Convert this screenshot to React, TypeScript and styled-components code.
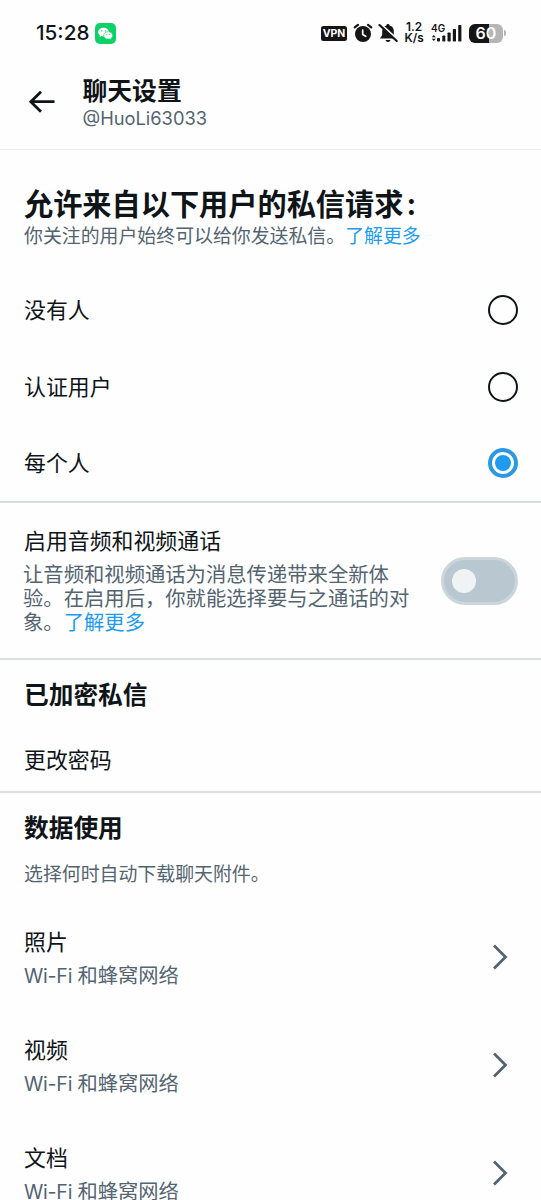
import React from 'react';
import styled, { createGlobalStyle } from 'styled-components';

const Global = createGlobalStyle`
  * { box-sizing: border-box; }
  html, body { margin: 0; padding: 0; background: #fefefe; overflow: hidden; height: 1200px; }
  body { font-family: Inter, "Noto Sans CJK SC", sans-serif; color: #0f1419; }
`;

const Screen = styled.main`
  width: 541px;
  height: 1200px;
  overflow: hidden;
  background: #fefefe;
`;

const StatusBar = styled.div`
  height: 66px;
  display: flex;
  align-items: center;
  padding: 0 38px 0 36px;
`;

const Clock = styled.span`
  font: 500 20.7px/24px Inter, sans-serif;
  width: 59px;
  white-space: nowrap;
`;

const StatusIcons = styled.div`
  margin-left: auto;
  display: flex;
  align-items: center;
`;

const VpnBadge = styled.span`
  width: 26px;
  height: 15px;
  margin-right: 6px;
  border-radius: 2.5px;
  background: #151515;
  color: #fff;
  font: 700 10.5px/15px Inter, sans-serif;
  text-align: center;
`;

const Gap = styled.span`
  width: 5px;
`;

const Speed = styled.span`
  width: 20px;
  margin: 0 7px 0 6px;
  font: 600 11.8px/11px Inter, sans-serif;
  text-align: center;
  display: flex;
  flex-direction: column;
`;

const Battery = styled.div`
  width: 34px;
  height: 19px;
  margin-left: 6px;
  border-radius: 6px;
  background: linear-gradient(90deg, #151515 60%, #b5b5b5 60%);
  color: #fff;
  font: 600 16px/19px Inter, sans-serif;
  text-align: center;
`;

const BatteryTip = styled.span`
  width: 2px;
  height: 6px;
  margin: 0 -3px 0 1px;
  border-radius: 0 2px 2px 0;
  background: #b5b5b5;
`;

const Header = styled.header`
  height: 84px;
  display: flex;
  padding: 11px 0 0 27px;
  border-bottom: 1px solid #e9eced;
`;

const BackIcon = styled.svg`
  width: 30px;
  height: 26px;
  margin: 12px 25.5px 0 0;
`;

const PageTitle = styled.h1`
  margin: 0;
  font-size: 24.8px;
  line-height: 29px;
  font-weight: 700;
`;

const Handle = styled.div`
  font-size: 18.3px;
  line-height: 24px;
  color: #536471;
`;

const Section = styled.section<{ $height: number; $top: number; $line?: string }>`
  height: ${p => p.$height}px;
  padding: ${p => p.$top}px 24px 0;
  border-bottom: 2px solid ${p => p.$line ?? '#dcdfe0'};
`;

const LargeHeading = styled.h2`
  margin: 0;
  font-size: 29.2px;
  line-height: 36px;
  font-weight: 700;
  white-space: nowrap;
`;

const Colon = styled.span`
  margin-left: 3px;
`;

const SectionHeading = styled.h2`
  margin: 0;
  font-size: 24.7px;
  line-height: 32px;
  font-weight: 700;
`;

const Note = styled.p<{ $gap?: number }>`
  margin: ${p => p.$gap ?? 0}px 0 0;
  font-size: 18.9px;
  line-height: 26px;
  color: #536471;
  white-space: nowrap;
`;

const Link = styled.a`
  color: #1d9bf0;
`;

const Options = styled.div`
  margin-top: 22px;
`;

const Option = styled.div`
  height: 76.5px;
  display: flex;
  align-items: center;
  justify-content: space-between;
`;

const Label = styled.div`
  font-size: 21.9px;
  line-height: 30px;
`;

const Radio = styled.span<{ $on: boolean }>`
  width: 30px;
  height: 30px;
  margin-right: -0.5px;
  border-radius: 50%;
  border: ${p => (p.$on ? '4px solid #2b98e4' : '2px solid #0f1419')};
  display: flex;
  align-items: center;
  justify-content: center;
  &::after {
    content: '';
    width: 16px;
    height: 16px;
    flex: none;
    border-radius: 50%;
    background: ${p => (p.$on ? '#1d9bf0' : 'transparent')};
  }
`;

const CallRow = styled.div`
  display: flex;
  justify-content: space-between;
`;

const CallText = styled.p`
  margin: 7px 0 0 -1px;
  width: 390px;
  font-size: 20.33px;
  line-height: 24px;
  color: #536471;
`;

const Toggle = styled.span`
  width: 77px;
  height: 48px;
  margin: 31px -1px 0 0;
  border-radius: 24px;
  border: 3px solid #cbd6dc;
  background: #b9c8d0;
  display: flex;
  align-items: center;
  padding-left: 8px;
  &::after {
    content: '';
    width: 24px;
    height: 24px;
    border-radius: 50%;
    background: #eff3f4;
  }
`;

const LinkRow = styled.div`
  margin-top: 34px;
`;

const DataList = styled.div`
  margin-top: 26px;
`;

const DataRow = styled.div`
  height: 108px;
  display: flex;
  justify-content: space-between;
  padding: 13px 8px 0 0;
`;

const Value = styled.div`
  margin-top: 5px;
  font-size: 20.3px;
  line-height: 28px;
  color: #536471;
  white-space: nowrap;
`;

const Network = styled.span`
  font-size: 19.6px;
  letter-spacing: -0.25px;
`;

const Chevron = styled.svg`
  width: 18px;
  height: 28px;
  margin-top: 16px;
`;

const options = [
  { label: '没有人', on: false },
  { label: '认证用户', on: false },
  { label: '每个人', on: true },
];

const downloads = ['照片', '视频', '文档'];

const WeChatIcon = () => (
  <svg width="21" height="21" viewBox="0 0 21 21">
    <rect width="21" height="21" rx="5" fill="#0bd267" />
    <path d="M8.6 4.700c-3.100 0-5.500 1.900-5.500 4.400 0 1.400.7 2.500 1.900 3.300l-.4 1.600 1.800-.9c.7.2 1.300.3 2 .3 3.100 0 5.600-1.900 5.600-4.300S11.600 4.700 8.600 4.700Z" fill="#fff" />
    <path d="M13.300 8.700c-2.600 0-4.600 1.600-4.600 3.700s2 3.700 4.600 3.700c.6 0 1.100-.1 1.600-.2l1.500.8-.4-1.400c1.100-.7 1.700-1.700 1.700-2.900 0-2.100-1.900-3.700-4.400-3.700Z" fill="#fff" stroke="#0bd267" strokeWidth=".6" />
    <g fill="#0bd267">
      <circle cx="6.800" cy="7.900" r=".7" /><circle cx="10.300" cy="7.900" r=".7" />
      <circle cx="11.800" cy="11.500" r=".6" /><circle cx="14.800" cy="11.500" r=".6" />
    </g>
  </svg>
);

const AlarmIcon = () => (
  <svg width="20" height="20" viewBox="0 0 20 20" fill="none" strokeLinecap="round">
    <circle cx="10" cy="11" r="8" fill="#151515" />
    <path d="M1.700 4.300 5 1.800M15 1.800l3.300 2.500" stroke="#151515" strokeWidth="2.200" />
    <path d="M9.700 7v4.600l3 1.700" stroke="#fff" strokeWidth="1.700" />
  </svg>
);

const MutedBellIcon = () => (
  <svg width="20" height="20" viewBox="0 0 20 20">
    <path d="M10 1c-.9 0-1.500.6-1.600 1.400C5.600 3.100 4.200 5.200 4.200 8v4L2 15.500h16L15.800 12V8c0-2.800-1.400-4.900-4.200-5.600C11.500 1.600 10.900 1 10 1Z" fill="#151515" />
    <path d="M7.500 17h5c-.4 1.300-1.300 2-2.500 2s-2.100-.7-2.500-2Z" fill="#151515" />
    <path d="M2.600.8 20 16.800" stroke="#fefefe" strokeWidth="1.800" />
    <path d="M1.500 2 18.700 18" stroke="#151515" strokeWidth="2.100" strokeLinecap="round" />
  </svg>
);

const SignalIcon = () => (
  <svg width="32" height="20" viewBox="0 0 32 20" fill="#151515">
    <text x="0" y="8.500" fontFamily="Inter, sans-serif" fontSize="10" fontWeight="600">4G</text>
    <path d="M.8 14.300 2.800 12l2 2.300ZM.8 15.700l2 2.300 2-2.300Z" />
    <rect x="6" y="15" width="3" height="3.500" rx=".8" />
    <rect x="11.300" y="12.500" width="3" height="6" rx=".8" />
    <rect x="16.500" y="9.500" width="3.200" height="9" rx=".8" />
    <rect x="21.800" y="6" width="3.200" height="12.500" rx=".8" />
    <rect x="27.200" y="2" width="3.200" height="16.500" rx=".8" />
  </svg>
);

export default function App() {
  return (
    <Screen>
      <Global />
      <StatusBar>
        <Clock>15:28</Clock>
        <WeChatIcon />
        <StatusIcons>
          <VpnBadge>VPN</VpnBadge>
          <AlarmIcon />
          <Gap />
          <MutedBellIcon />
          <Speed><span>1.2</span><span>K/s</span></Speed>
          <SignalIcon />
          <Battery>60</Battery>
          <BatteryTip />
        </StatusIcons>
      </StatusBar>
      <Header>
        <BackIcon viewBox="0 0 30 26" fill="none" stroke="#0f1419" strokeWidth="2.800">
          <path d="M27.500 12.700H3.800M14 2.700 3.800 12.700l10.200 10" />
        </BackIcon>
        <div>
          <PageTitle>聊天设置</PageTitle>
          <Handle>@HuoLi63033</Handle>
        </div>
      </Header>
      <Section $height={353} $top={37} $line="#d3dde2">
        <LargeHeading>允许来自以下用户的私信请求<Colon>:</Colon></LargeHeading>
        <Note $gap={1}>你关注的用户始终可以给你发送私信。<Link>了解更多</Link></Note>
        <Options>
          {options.map(o => (
            <Option key={o.label}>
              <Label>{o.label}</Label>
              <Radio $on={o.on} />
            </Option>
          ))}
        </Options>
      </Section>
      <Section $height={157} $top={23}>
        <CallRow>
          <div>
            <Label>启用音频和视频通话</Label>
            <CallText>让音频和视频通话为消息传递带来全新体验。在启用后，你就能选择要与之通话的对象。<Link>了解更多</Link></CallText>
          </div>
          <Toggle />
        </CallRow>
      </Section>
      <Section $height={133} $top={19}>
        <SectionHeading>已加密私信</SectionHeading>
        <LinkRow><Label>更改密码</Label></LinkRow>
      </Section>
      <Section $height={420} $top={19}>
        <SectionHeading>数据使用</SectionHeading>
        <Note $gap={18}>选择何时自动下载聊天附件。</Note>
        <DataList>
          {downloads.map(d => (
            <DataRow key={d}>
              <div>
                <Label>{d}</Label>
                <Value><Network>Wi-Fi </Network>和蜂窝网络</Value>
              </div>
              <Chevron viewBox="0 0 18 28" fill="none" stroke="#536471" strokeWidth="2.800">
                <path d="M3 2.500 14.500 14 3 25.500" />
              </Chevron>
            </DataRow>
          ))}
        </DataList>
      </Section>
    </Screen>
  );
}
